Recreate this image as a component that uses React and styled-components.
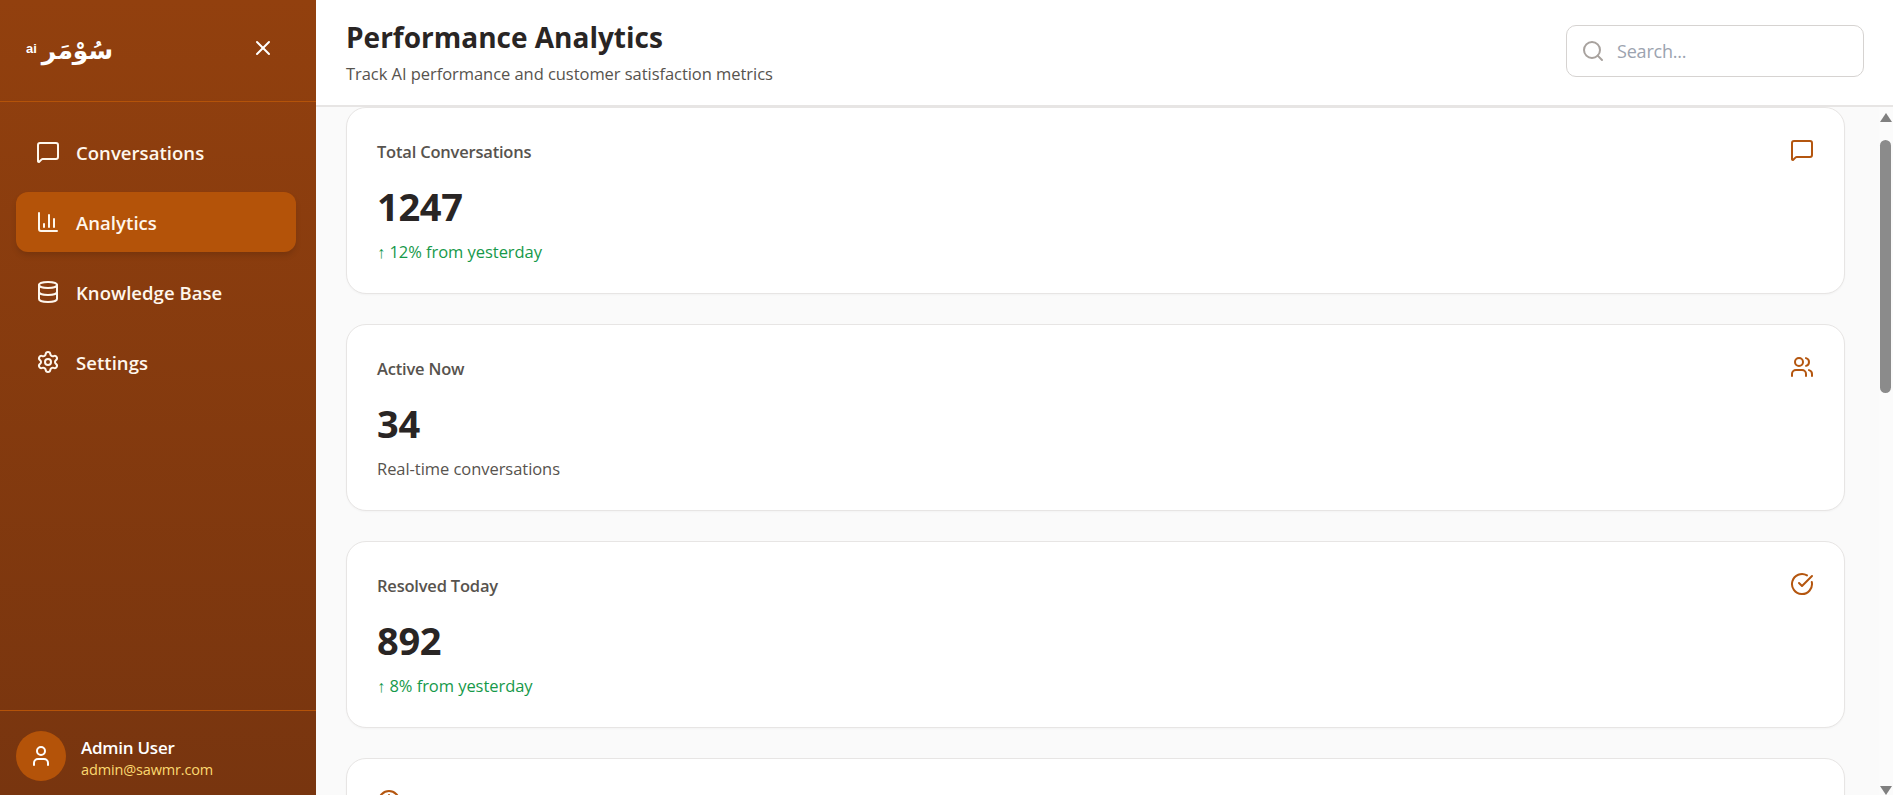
import React from "react";
import styled, { createGlobalStyle } from "styled-components";
import {
  MessageSquare, ChartColumn, Database, Settings, X, Search, User, Users, CircleCheckBig, Clock,
} from "lucide-react";

const Global = createGlobalStyle`
  html, body { margin: 0; padding: 0; height: 100%; overflow: hidden; }
  #root { height: 100%; }
  * { box-sizing: border-box; }
  body { font-family: "Open Sans", "Noto Sans", sans-serif; }
`;

const Shell = styled.div`
  display: flex;
  height: 795px;
  width: 1893px;
  overflow: hidden;
`;

const Sidebar = styled.aside`
  width: 316px;
  flex: none;
  display: flex;
  flex-direction: column;
  background: linear-gradient(180deg, #92400e 0%, #78350f 100%);
  color: #fff;
`;

const Brand = styled.div`
  height: 102px;
  flex: none;
  display: flex;
  align-items: center;
  justify-content: space-between;
  padding: 0 20px 5px 26px;
  border-bottom: 1px solid #b45309;
`;

const Logo = styled.div`
  display: flex;
  align-items: center;
  gap: 5px;
  margin-top: 5px;
`;

const LogoAi = styled.span`
  font-family: "Liberation Sans", sans-serif;
  font-size: 13px;
  font-weight: 700;
  margin-top: -4px;
`;

const LogoWord = styled.span`
  font-family: "DejaVu Sans", sans-serif;
  font-size: 25px;
  font-weight: 700;
  line-height: 1;
`;

const CloseButton = styled.button`
  all: unset;
  display: flex;
  width: 24px;
  height: 24px;
  margin-right: 21px;
  color: #fff;
`;

const Nav = styled.nav`
  flex: 1;
  display: flex;
  flex-direction: column;
  gap: 10px;
  padding: 20px 20px 20px 16px;
`;

const NavItem = styled.a`
  display: flex;
  align-items: center;
  gap: 16px;
  height: 60px;
  padding: 0 20px;
  border-radius: 12px;
  font-size: 18.5px;
  font-weight: 600;
  letter-spacing: 0.05px;
  color: #fff7ed;
  background: ${(p) => (p.$active ? "#b45309" : "transparent")};
  box-shadow: ${(p) => (p.$active ? "0 4px 6px -1px rgba(0,0,0,.15)" : "none")};
`;

const NavLabel = styled.span`
  padding-top: 1px;
`;

const Footer = styled.div`
  height: 85px;
  flex: none;
  display: flex;
  align-items: center;
  gap: 15px;
  padding: 6px 16px 0;
  border-top: 1px solid #b45309;
`;

const Avatar = styled.div`
  width: 50px;
  height: 50px;
  border-radius: 50%;
  background: #b45309;
  display: flex;
  align-items: center;
  justify-content: center;
  color: #fff;
`;

const UserText = styled.div`
  display: flex;
  flex-direction: column;
  gap: 1px;
  margin-top: 3px;
`;

const UserName = styled.div`
  font-size: 17px;
  font-weight: 600;
  line-height: 22px;
  letter-spacing: -0.25px;
  color: #fff;
`;

const UserMail = styled.div`
  font-size: 14.5px;
  line-height: 19px;
  letter-spacing: -0.15px;
  color: #fcd96f;
`;

const Main = styled.main`
  flex: 1;
  min-width: 0;
  display: flex;
  flex-direction: column;
  background: #fafafa;
`;

const Header = styled.header`
  height: 107px;
  flex: none;
  display: flex;
  align-items: center;
  justify-content: space-between;
  padding: 0 29px 2px 30px;
  background: #fff;
  border-bottom: 2px solid #e7e5e4;
`;

const Titles = styled.div`
  display: flex;
  flex-direction: column;
  gap: 7px;
`;

const Title = styled.h1`
  margin: 0;
  font-size: 28px;
  line-height: 38px;
  font-weight: 700;
  color: #292524;
`;

const Subtitle = styled.p`
  margin: 0;
  font-size: 16.5px;
  line-height: 22px;
  letter-spacing: -0.05px;
  color: #57534e;
`;

const SearchBox = styled.label`
  width: 298px;
  height: 52px;
  margin-top: -1px;
  display: flex;
  align-items: center;
  gap: 12px;
  padding: 0 14px;
  border: 1px solid #d6d3d1;
  border-radius: 10px;
  background: #fff;
  color: #a8a29e;
`;

const SearchInput = styled.input`
  all: unset;
  flex: 1;
  min-width: 0;
  font-size: 18px;
  letter-spacing: -0.2px;
  color: #292524;
  &::placeholder { color: #9ca3af; opacity: 1; }
`;

const ScrollArea = styled.div`
  position: relative;
  flex: 1;
  min-height: 0;
  overflow: hidden;
`;

const ScrollTrack = styled.div`
  position: absolute;
  top: 0;
  right: 0;
  bottom: 0;
  width: 14px;
  display: flex;
  flex-direction: column;
  align-items: center;
  padding: 6px 2px 0 1px;
  background: #fbfbfb;
`;

const ScrollArrow = styled.svg`
  width: 12px;
  height: 9px;
  flex: none;
  fill: #808080;
  margin-top: ${(p) => (p.$down ? "auto" : "0")};
`;

const ScrollThumb = styled.div`
  width: 11px;
  height: 253px;
  flex: none;
  margin-top: 18px;
  border-radius: 6px;
  background: #8b8b8b;
`;

const CardList = styled.div`
  display: flex;
  flex-direction: column;
  gap: 30px;
  padding: 0 48px 30px 30px;
`;

const Card = styled.section`
  height: 187px;
  flex: none;
  padding: 30px;
  background: #fff;
  border: 1px solid #e7e5e4;
  border-radius: 20px;
  box-shadow: 0 1px 2px rgba(0,0,0,.03);
`;

const CardTop = styled.div`
  display: flex;
  flex-direction: ${(p) => (p.$iconFirst ? "row-reverse" : "row")};
  justify-content: ${(p) => (p.$iconFirst ? "flex-end" : "space-between")};
  gap: 10px;
  align-items: flex-start;
  color: #b4560f;
`;

const CardLabel = styled.div`
  font-size: 16.5px;
  line-height: 28px;
  font-weight: 600;
  letter-spacing: -0.2px;
  color: #57534e;
`;

const CardValue = styled.div`
  margin-top: 15px;
  font-size: 38px;
  line-height: 50px;
  font-weight: 700;
  letter-spacing: -0.3px;
  color: #292524;
`;

const CardNote = styled.div`
  margin-top: 9px;
  font-size: 16.5px;
  line-height: 24px;
  letter-spacing: -0.05px;
  color: ${(p) => (p.$up ? "#16994a" : "#57534e")};
`;

const navItems = [
  { label: "Conversations", Icon: MessageSquare },
  { label: "Analytics", Icon: ChartColumn, active: true },
  { label: "Knowledge Base", Icon: Database },
  { label: "Settings", Icon: Settings },
];

const cards = [
  { label: "Total Conversations", value: "1247", note: "↑ 12% from yesterday", up: true, Icon: MessageSquare },
  { label: "Active Now", value: "34", note: "Real-time conversations", Icon: Users },
  { label: "Resolved Today", value: "892", note: "↑ 8% from yesterday", up: true, Icon: CircleCheckBig },
  { label: "Avg Response Time", value: "1.2s", note: "Across all channels", Icon: Clock, iconFirst: true },
];

export default function App() {
  return (
    <>
      <Global />
      <Shell>
        <Sidebar>
          <Brand>
            <Logo>
              <LogoAi>ai</LogoAi>
              <LogoWord dir="rtl" lang="ar">سُوْمَر</LogoWord>
            </Logo>
            <CloseButton aria-label="Close"><X size={24} /></CloseButton>
          </Brand>
          <Nav>
            {navItems.map(({ label, Icon, active }) => (
              <NavItem key={label} $active={active}>
                <Icon size={24} strokeWidth={2} />
                <NavLabel>{label}</NavLabel>
              </NavItem>
            ))}
          </Nav>
          <Footer>
            <Avatar><User size={24} /></Avatar>
            <UserText>
              <UserName>Admin User</UserName>
              <UserMail>admin@sawmr.com</UserMail>
            </UserText>
          </Footer>
        </Sidebar>
        <Main>
          <Header>
            <Titles>
              <Title>Performance Analytics</Title>
              <Subtitle>Track AI performance and customer satisfaction metrics</Subtitle>
            </Titles>
            <SearchBox>
              <Search size={24} />
              <SearchInput placeholder="Search..." />
            </SearchBox>
          </Header>
          <ScrollArea>
            <CardList>
              {cards.map(({ label, value, note, up, Icon, iconFirst }) => (
                <Card key={label}>
                  <CardTop $iconFirst={iconFirst}>
                    <CardLabel>{label}</CardLabel>
                    <Icon size={24} />
                  </CardTop>
                  <CardValue>{value}</CardValue>
                  <CardNote $up={up}>{note}</CardNote>
                </Card>
              ))}
            </CardList>
            <ScrollTrack aria-hidden="true">
              <ScrollArrow viewBox="0 0 12 9"><path d="M6 0l6 9H0z" /></ScrollArrow>
              <ScrollThumb />
              <ScrollArrow $down viewBox="0 0 12 9"><path d="M6 9l6-9H0z" /></ScrollArrow>
            </ScrollTrack>
          </ScrollArea>
        </Main>
      </Shell>
    </>
  );
}
